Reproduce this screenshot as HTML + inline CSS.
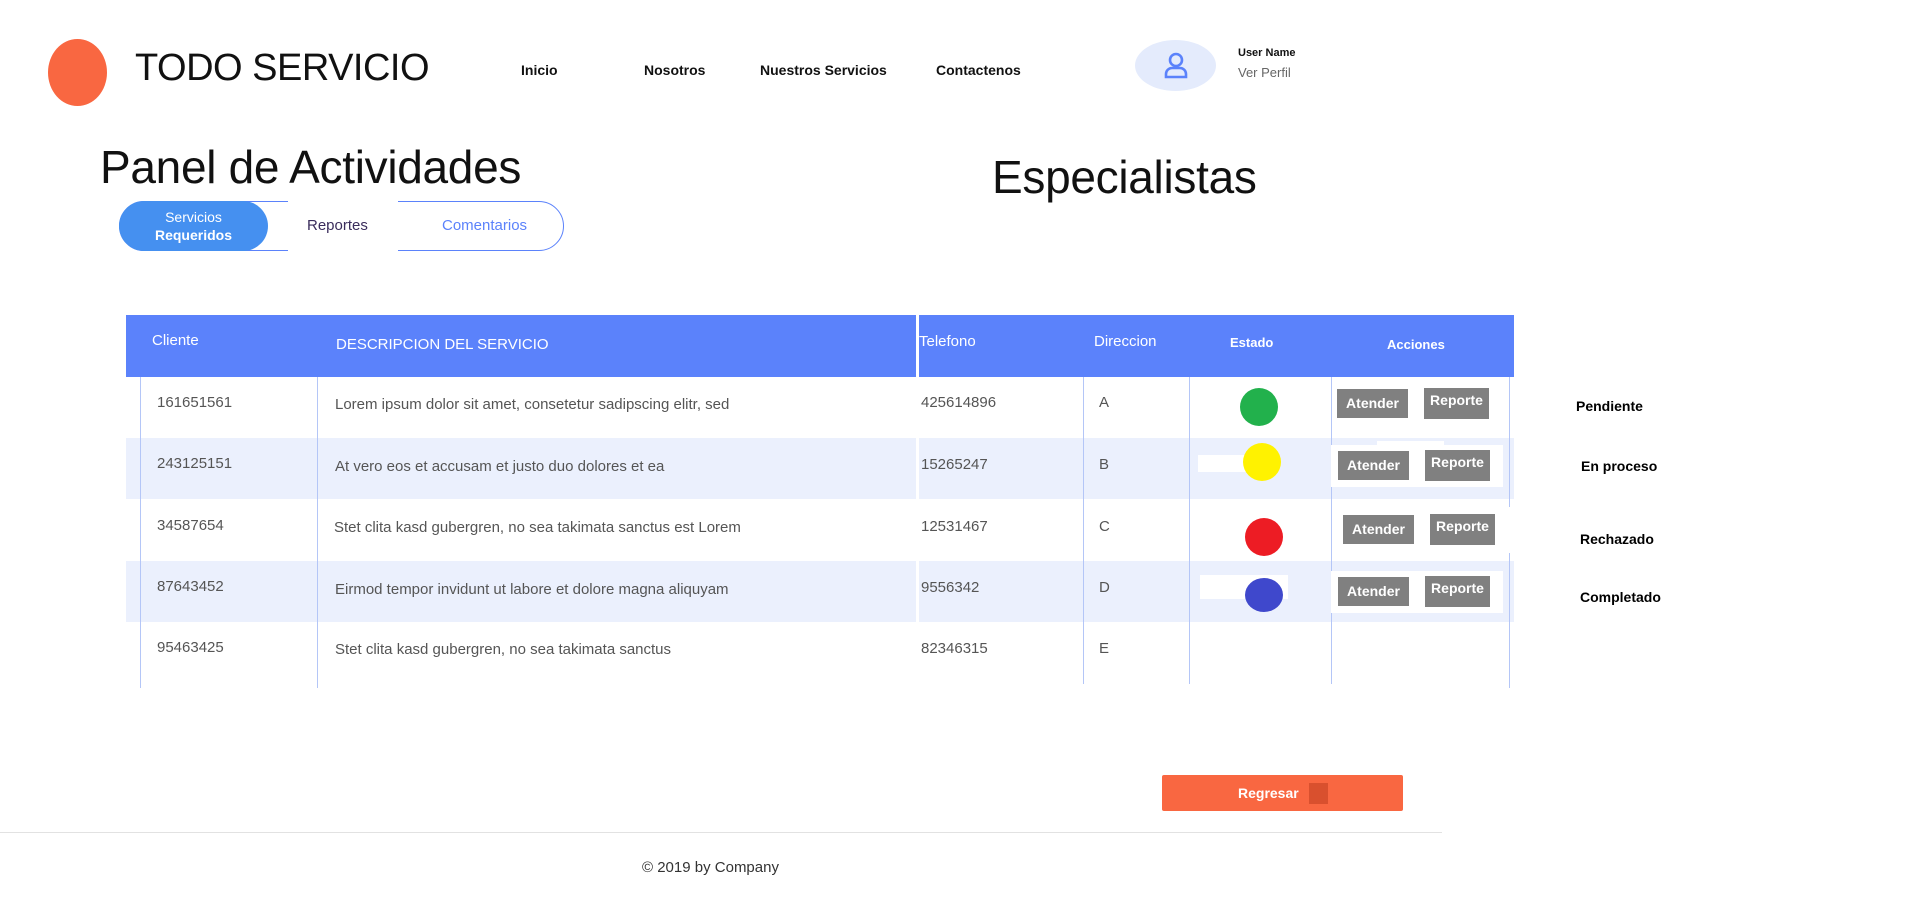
<!DOCTYPE html>
<html><head><meta charset="utf-8"><style>
*{margin:0;padding:0;box-sizing:border-box}
body{width:1914px;height:900px;background:#fff;position:relative;overflow:hidden;font-family:"Liberation Sans",sans-serif;color:#222}
.a{position:absolute;white-space:nowrap}
.nav{font-weight:bold;font-size:14px;color:#111;top:62px}
.hd{color:#fff;font-size:15px;font-weight:300}
.cell{font-size:15px;color:#555}
.vl{position:absolute;width:1px;background:#b4c6f7}
.btn{position:absolute;background:#808080;color:#fff;font-weight:bold;font-size:14px;text-align:center}
.dot{position:absolute;width:38px;height:38px;border-radius:50%}
.st{font-weight:bold;font-size:14px;color:#000}
</style></head><body>
<div class="a" style="left:48px;top:39px;width:59px;height:67px;border-radius:50%;background:#f96741"></div>
<div class="a" style="left:135px;top:47px;font-size:38px;color:#111;letter-spacing:-0.5px">TODO SERVICIO</div>
<div class="a nav" style="left:521px">Inicio</div>
<div class="a nav" style="left:644px">Nosotros</div>
<div class="a nav" style="left:760px">Nuestros Servicios</div>
<div class="a nav" style="left:936px">Contactenos</div>
<div class="a" style="left:1135px;top:40px;width:81px;height:51px;border-radius:50%;background:#e4ebfc"></div>
<svg class="a" style="left:1161px;top:50px" width="30" height="30" viewBox="0 0 30 30" fill="none" stroke="#5b82fb" stroke-width="2.6"><circle cx="15" cy="10" r="6"/><path d="M5 27v-3a6 6 0 0 1 6-6h8a6 6 0 0 1 6 6v3z"/></svg>
<div class="a" style="left:1238px;top:47px;font-size:11px;font-weight:bold;color:#111">User Name</div>
<div class="a" style="left:1238px;top:65px;font-size:13px;color:#666">Ver Perfil</div>
<div class="a" style="left:100px;top:140px;font-size:46px;color:#111;letter-spacing:-0.3px">Panel de Actividades</div>
<div class="a" style="left:992px;top:150px;font-size:46px;color:#111;letter-spacing:-0.3px">Especialistas</div>
<div class="a" style="left:119px;top:201px;width:445px;height:50px;border:1px solid #5b82fb;border-radius:25px"></div>
<div class="a" style="left:288px;top:199px;width:110px;height:4px;background:#fff"></div>
<div class="a" style="left:288px;top:249px;width:110px;height:4px;background:#fff"></div>
<div class="a" style="left:119px;top:201px;width:149px;height:50px;border-radius:25px;background:#4590f0;color:#fff;text-align:center;font-size:14px;line-height:18px;padding-top:7px">Servicios<br><b>Requeridos</b></div>
<div class="a" style="left:307px;top:217px;font-size:15px;color:#3a2d5c">Reportes</div>
<div class="a" style="left:442px;top:217px;font-size:15px;color:#5b82fb">Comentarios</div>
<!-- table -->
<div class="a" style="left:126px;top:315px;width:1388px;height:62px;background:#5b82fb"></div>
<div class="a" style="left:916px;top:313px;width:3px;height:66px;background:#fff"></div>
<div class="a" style="left:126px;top:438px;width:1388px;height:61px;background:#ebf0fd"></div>
<div class="a" style="left:126px;top:561px;width:1388px;height:61px;background:#ebf0fd"></div>
<div class="a" style="left:916px;top:438px;width:3px;height:61px;background:#fff"></div>
<div class="a" style="left:916px;top:561px;width:3px;height:61px;background:#fff"></div>
<div class="vl" style="left:140px;top:377px;height:311px"></div>
<div class="vl" style="left:317px;top:377px;height:311px"></div>
<div class="vl" style="left:1083px;top:377px;height:307px"></div>
<div class="vl" style="left:1189px;top:377px;height:307px"></div>
<div class="vl" style="left:1331px;top:377px;height:307px"></div>
<div class="vl" style="left:1509px;top:377px;height:130px"></div>
<div class="vl" style="left:1509px;top:553px;height:135px"></div>
<div class="a hd" style="left:152px;top:332px">Cliente</div>
<div class="a hd" style="left:336px;top:336px">DESCRIPCION DEL SERVICIO</div>
<div class="a hd" style="left:919px;top:333px">Telefono</div>
<div class="a hd" style="left:1094px;top:333px">Direccion</div>
<div class="a" style="left:1230px;top:335px;color:#fff;font-weight:bold;font-size:13px">Estado</div>
<div class="a" style="left:1387px;top:337px;color:#fff;font-weight:bold;font-size:13px">Acciones</div>

<div class="a cell" style="left:157px;top:394px">161651561</div>
<div class="a cell" style="left:335px;top:396px">Lorem ipsum dolor sit amet, consetetur sadipscing elitr, sed</div>
<div class="a cell" style="left:921px;top:394px">425614896</div>
<div class="a cell" style="left:1099px;top:394px">A</div>

<div class="a cell" style="left:157px;top:455px">243125151</div>
<div class="a cell" style="left:335px;top:458px">At vero eos et accusam et justo duo dolores et ea</div>
<div class="a cell" style="left:921px;top:456px">15265247</div>
<div class="a cell" style="left:1099px;top:456px">B</div>

<div class="a cell" style="left:157px;top:517px">34587654</div>
<div class="a cell" style="left:334px;top:519px">Stet clita kasd gubergren, no sea takimata sanctus est Lorem</div>
<div class="a cell" style="left:921px;top:518px">12531467</div>
<div class="a cell" style="left:1099px;top:518px">C</div>

<div class="a cell" style="left:157px;top:578px">87643452</div>
<div class="a cell" style="left:335px;top:581px">Eirmod tempor invidunt ut labore et dolore magna aliquyam</div>
<div class="a cell" style="left:921px;top:579px">9556342</div>
<div class="a cell" style="left:1099px;top:579px">D</div>

<div class="a cell" style="left:157px;top:639px">95463425</div>
<div class="a cell" style="left:335px;top:641px">Stet clita kasd gubergren, no sea takimata sanctus</div>
<div class="a cell" style="left:921px;top:640px">82346315</div>
<div class="a cell" style="left:1099px;top:640px">E</div>

<div class="dot" style="left:1240px;top:388px;background:#22b14c"></div>
<div class="a" style="left:1198px;top:455px;width:60px;height:17px;background:#fff"></div>
<div class="dot" style="left:1243px;top:443px;background:#fff200"></div>
<div class="dot" style="left:1245px;top:518px;background:#ed1c24"></div>
<div class="a" style="left:1200px;top:575px;width:88px;height:24px;background:#fff"></div>
<div class="dot" style="left:1245px;top:578px;background:#3f48cc;height:34px;width:38px"></div>

<div class="a" style="left:1331px;top:445px;width:172px;height:42px;background:#fff"></div>
<div class="a" style="left:1377px;top:441px;width:67px;height:6px;background:#fff"></div>
<div class="a" style="left:1331px;top:571px;width:172px;height:42px;background:#fff"></div>
<div class="a" style="left:1503px;top:508px;width:12px;height:45px;background:#fff"></div>

<div class="btn" style="left:1337px;top:389px;width:71px;height:29px;line-height:29px">Atender</div>
<div class="btn" style="left:1424px;top:388px;width:65px;height:31px;line-height:24px">Reporte</div>
<div class="btn" style="left:1338px;top:451px;width:71px;height:29px;line-height:29px">Atender</div>
<div class="btn" style="left:1425px;top:450px;width:65px;height:31px;line-height:24px">Reporte</div>
<div class="btn" style="left:1343px;top:515px;width:71px;height:29px;line-height:29px">Atender</div>
<div class="btn" style="left:1430px;top:514px;width:65px;height:31px;line-height:24px">Reporte</div>
<div class="btn" style="left:1338px;top:577px;width:71px;height:29px;line-height:29px">Atender</div>
<div class="btn" style="left:1425px;top:576px;width:65px;height:31px;line-height:24px">Reporte</div>

<div class="a st" style="left:1576px;top:398px">Pendiente</div>
<div class="a st" style="left:1581px;top:458px">En proceso</div>
<div class="a st" style="left:1580px;top:531px">Rechazado</div>
<div class="a st" style="left:1580px;top:589px">Completado</div>

<div class="a" style="left:1162px;top:775px;width:241px;height:36px;background:#f96741;border-radius:2px"></div>
<div class="a" style="left:1238px;top:785px;color:#fff;font-weight:bold;font-size:14px">Regresar</div>
<div class="a" style="left:1309px;top:783px;width:19px;height:21px;background:#d9502e"></div>
<div class="a" style="left:0;top:832px;width:1442px;height:1px;background:#e2e2e2"></div>
<div class="a" style="left:642px;top:859px;font-size:15px;color:#333">© 2019 by Company</div>
</body></html>
